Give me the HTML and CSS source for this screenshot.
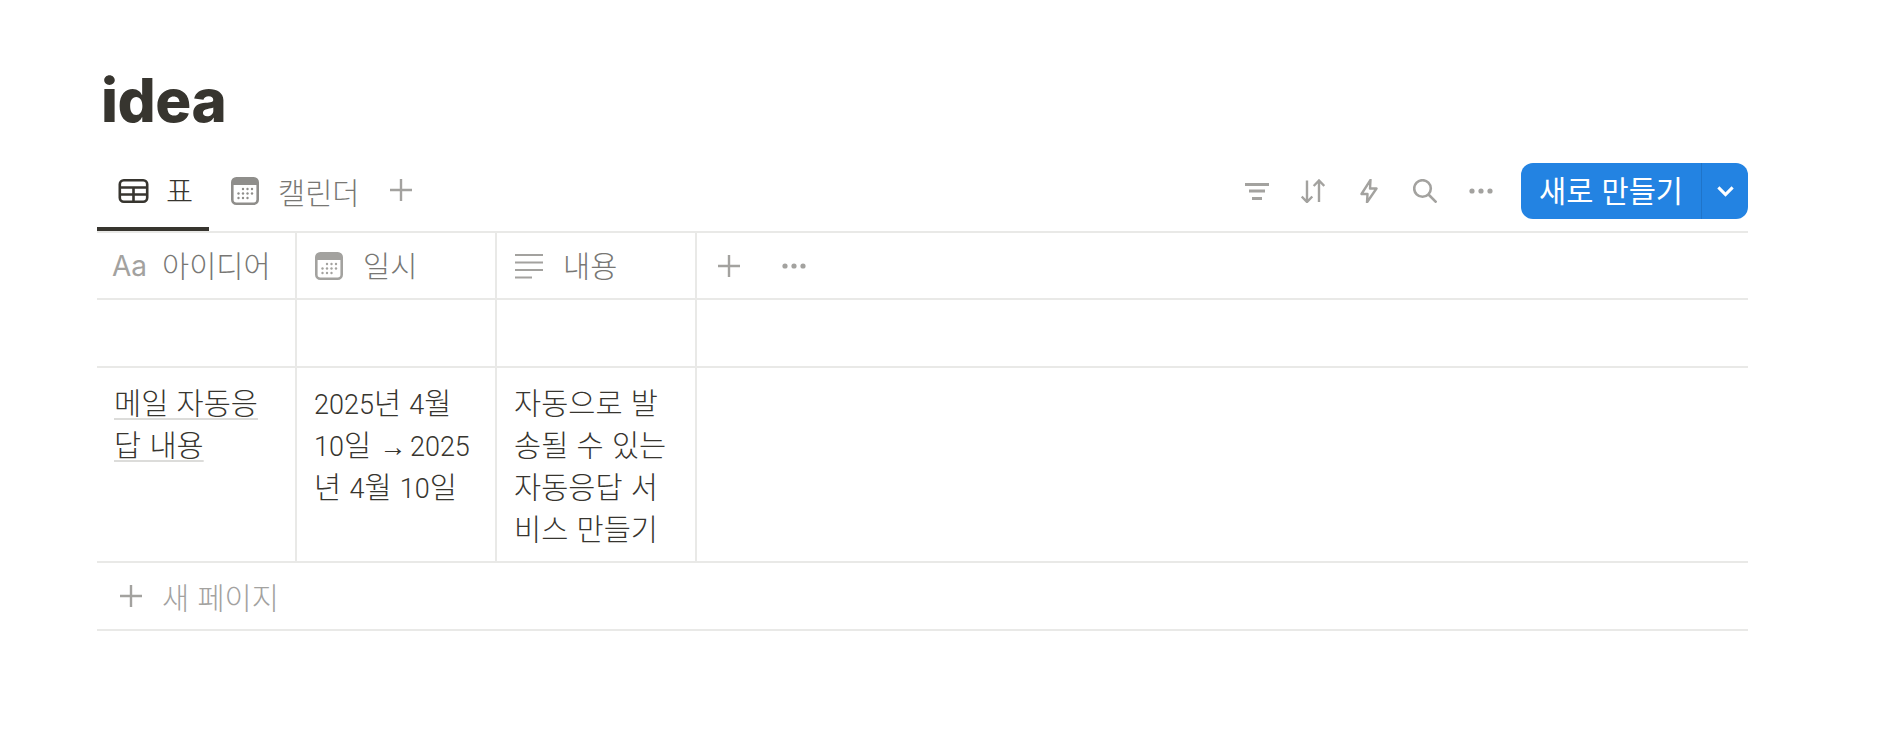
FILE: index.html
```html
<!DOCTYPE html>
<html lang="ko">
<head>
  <meta charset="UTF-8">
  <meta name="viewport" content="width=device-width, initial-scale=1.0">
  <title>idea</title>
  <link rel="stylesheet" href="styles.css">
</head>
<body>
  <!-- Shared icons -->
  <svg class="icon-defs" aria-hidden="true">
    <symbol id="ic-calendar" viewBox="0 0 28 28">
      <rect x="1.3" y="1.3" width="25.4" height="25.4" rx="4" fill="none" stroke="currentColor" stroke-width="2.600"/>
      <path d="M1 5a4 4 0 0 1 4-4h18a4 4 0 0 1 4 4v3H1z" fill="currentColor"/>
      <g fill="currentColor">
        <circle cx="12" cy="12" r="1.200"/><circle cx="16.500" cy="12" r="1.200"/><circle cx="21" cy="12" r="1.200"/>
        <circle cx="7.500" cy="16.500" r="1.200"/><circle cx="12" cy="16.500" r="1.200"/><circle cx="16.500" cy="16.500" r="1.200"/><circle cx="21" cy="16.500" r="1.200"/>
        <circle cx="7.500" cy="21" r="1.200"/><circle cx="12" cy="21" r="1.200"/><circle cx="16.500" cy="21" r="1.200"/>
      </g>
    </symbol>
    <symbol id="ic-plus" viewBox="0 0 24 24">
      <path d="M12 1v22M1 12h22" fill="none" stroke="currentColor" stroke-width="2.400"/>
    </symbol>
    <symbol id="ic-dots" viewBox="0 0 24 6">
      <circle cx="3" cy="3" r="2.600" fill="currentColor"/><circle cx="12" cy="3" r="2.600" fill="currentColor"/><circle cx="21" cy="3" r="2.600" fill="currentColor"/>
    </symbol>
  </svg>

  <main class="page">
    <h1 class="page-title">idea</h1>

    <!-- View tabs and toolbar -->
    <div class="view-bar">
      <div class="tabs">
        <a class="tab active">
          <svg class="tab-icon" viewBox="0 0 30 24"><rect x="1.300" y="1.300" width="27.400" height="21.400" rx="4" fill="none" stroke="currentColor" stroke-width="2.600"/><path d="M1.300 8.500h27.400M1.300 15.500h27.400M15 8.500v14" fill="none" stroke="currentColor" stroke-width="2.600"/></svg>
          <span class="raised">표</span>
        </a>
        <a class="tab">
          <svg class="tab-icon cal"><use href="#ic-calendar"/></svg>
          <span>캘린더</span>
        </a>
        <svg class="tab-add"><use href="#ic-plus"/></svg>
      </div>

      <div class="toolbar">
        <svg class="tool" viewBox="0 0 24 24"><path d="M0 5.500h24M4 12h16M7 19.500h10" fill="none" stroke="currentColor" stroke-width="2.800"/></svg>
        <svg class="tool" viewBox="0 0 24 24"><path d="M6 1.500V23M.700 17.500 6 23l5.300-5.500M18 23V1.500M12.700 7 18 1.500 23.300 7" fill="none" stroke="currentColor" stroke-width="2.400"/></svg>
        <svg class="tool" viewBox="0 0 24 24"><path d="M13.500.800 4.500 15h6L10 23.200 19.500 9.500H13z" fill="none" stroke="currentColor" stroke-width="2.400" stroke-linejoin="round"/></svg>
        <svg class="tool" viewBox="0 0 24 24"><circle cx="9.500" cy="9.500" r="8.300" fill="none" stroke="currentColor" stroke-width="2.600"/><path d="m15.500 15.500 8 8" fill="none" stroke="currentColor" stroke-width="2.600"/></svg>
        <svg class="tool dots"><use href="#ic-dots"/></svg>
        <div class="new-btn">
          <span class="new-label">새로 만들기</span>
          <span class="new-arrow">
            <svg viewBox="0 0 16 10"><path d="m2 2 6 6 6-6" fill="none" stroke="currentColor" stroke-width="2.600"/></svg>
          </span>
        </div>
      </div>
    </div>

    <!-- Table -->
    <div class="table">
      <div class="row head-row">
        <div class="cell head">
          <span class="aa">Aa</span>
          <span class="raised">아이디어</span>
        </div>
        <div class="cell head">
          <svg class="head-icon"><use href="#ic-calendar"/></svg>
          <span class="raised">일시</span>
        </div>
        <div class="cell head">
          <svg class="head-icon" viewBox="0 0 28 28"><path d="M0 3h28M0 10.500h28M0 18h28M0 25.500h17" fill="none" stroke="currentColor" stroke-width="2.200"/></svg>
          <span class="raised">내용</span>
        </div>
        <div class="cell-rest head-actions">
          <svg class="head-add"><use href="#ic-plus"/></svg>
          <svg class="head-dots"><use href="#ic-dots"/></svg>
        </div>
      </div>

      <div class="row empty-row">
        <div class="cell"></div>
        <div class="cell"></div>
        <div class="cell"></div>
        <div class="cell-rest"></div>
      </div>

      <div class="row">
        <div class="cell body-cell"><span class="page-link">메일 자동응답 내용</span></div>
        <div class="cell body-cell"><span class="num">2025</span>년 <span class="num">4</span>월 <span class="num">10</span>일 <span class="num">→ 2025</span>년 <span class="num">4</span>월 <span class="num">10</span>일</div>
        <div class="cell body-cell">자동으로 발송될 수 있는 자동응답 서비스 만들기</div>
        <div class="cell-rest"></div>
      </div>

      <div class="new-row">
        <svg class="new-row-plus"><use href="#ic-plus"/></svg>
        <span>새 페이지</span>
      </div>
    </div>
  </main>
</body>
</html>
```

FILE: styles.css
```css
body {
  margin: 0;
  background: #fff;
  color: #37352f;
  font-family: "Noto Sans CJK KR", "Noto Sans", sans-serif;
  font-weight: 300;
  font-size: 29.5px;
  line-height: 42px;
}
.icon-defs {
  display: none;
}
.page {
  width: 1651px;
  padding-left: 97px;
}
.page-title {
  margin: 0;
  height: 162px;
  padding: 64px 0 0 4px;
  box-sizing: border-box;
  font-family: Inter, sans-serif;
  font-size: 60px;
  font-weight: 800;
  line-height: 72px;
  letter-spacing: -0.5px;
}

/* tabs + toolbar */
.view-bar {
  display: flex;
  justify-content: space-between;
  height: 69px;
}
.tabs {
  display: flex;
  align-items: stretch;
}
.tab {
  display: flex;
  align-items: center;
  gap: 19px;
  padding: 0 16px 12px 22px;
  color: #787774;
}
.tab.active {
  gap: 17px;
  width: 112px;
  padding: 0 0 8px 21px;
  box-sizing: border-box;
  color: #37352f;
  border-bottom: 4px solid #37352f;
}
.tab-icon {
  width: 31px;
  height: 24px;
}
.tab-icon.cal {
  width: 28px;
  height: 28px;
  color: #8f8e8b;
}
.tab-add {
  width: 24px;
  height: 24px;
  margin: 16px 0 0 14px;
  color: #a3a29f;
}
.raised {
  margin-bottom: 4px;
}
.toolbar {
  display: flex;
  align-items: center;
  gap: 32px;
  padding-bottom: 12px;
  color: #a3a29f;
}
.tool {
  width: 24px;
  height: 24px;
}
.tool.dots {
  height: 6px;
}
.new-btn {
  display: flex;
  height: 56px;
  margin-left: -4px;
  border-radius: 12px;
  background: #2383e2;
  color: #fff;
  font-weight: 400;
}
.new-label {
  width: 180px;
  text-align: center;
  line-height: 52px;
  border-right: 1px solid #1f74c9;
}
.new-arrow {
  display: flex;
  align-items: center;
  justify-content: center;
  width: 46px;
}
.new-arrow svg {
  width: 19px;
  height: 12px;
}

/* table */
.table {
  border-top: 2px solid #e9e9e7;
}
.row {
  display: grid;
  grid-template-columns: 200px 200px 200px 1fr;
  border-bottom: 2px solid #e9e9e7;
}
.head-row {
  height: 65px;
}
.empty-row {
  height: 66px;
}
.cell {
  border-right: 2px solid #e9e9e7;
  box-sizing: border-box;
}
.head {
  display: flex;
  align-items: center;
  gap: 20px;
  padding-left: 18px;
  color: #787774;
}
.aa {
  width: 30px;
  margin-left: -3px;
  font-family: Inter, sans-serif;
  font-weight: 400;
  font-size: 28px;
  color: #a3a29f;
}
.head-icon {
  width: 28px;
  height: 28px;
  color: #a3a29f;
}
.head-actions {
  display: flex;
  align-items: center;
  gap: 40px;
  padding-left: 20px;
  color: #a3a29f;
}
.head-add {
  width: 24px;
  height: 24px;
}
.head-dots {
  width: 26px;
  height: 6px;
}
.body-cell {
  padding: 12px 17px 13px;
}
.num {
  font-family: Roboto, sans-serif;
  font-size: 27px;
  line-height: 1;
  word-spacing: -3px;
}
.page-link {
  text-decoration: underline 2px #dcdcda;
  text-decoration-skip-ink: none;
  text-underline-offset: 4px;
}
.new-row {
  display: flex;
  align-items: center;
  gap: 19px;
  height: 66px;
  padding-left: 22px;
  border-bottom: 2px solid #e9e9e7;
  color: #a3a29f;
}
.new-row-plus {
  width: 24px;
  height: 24px;
}
```
